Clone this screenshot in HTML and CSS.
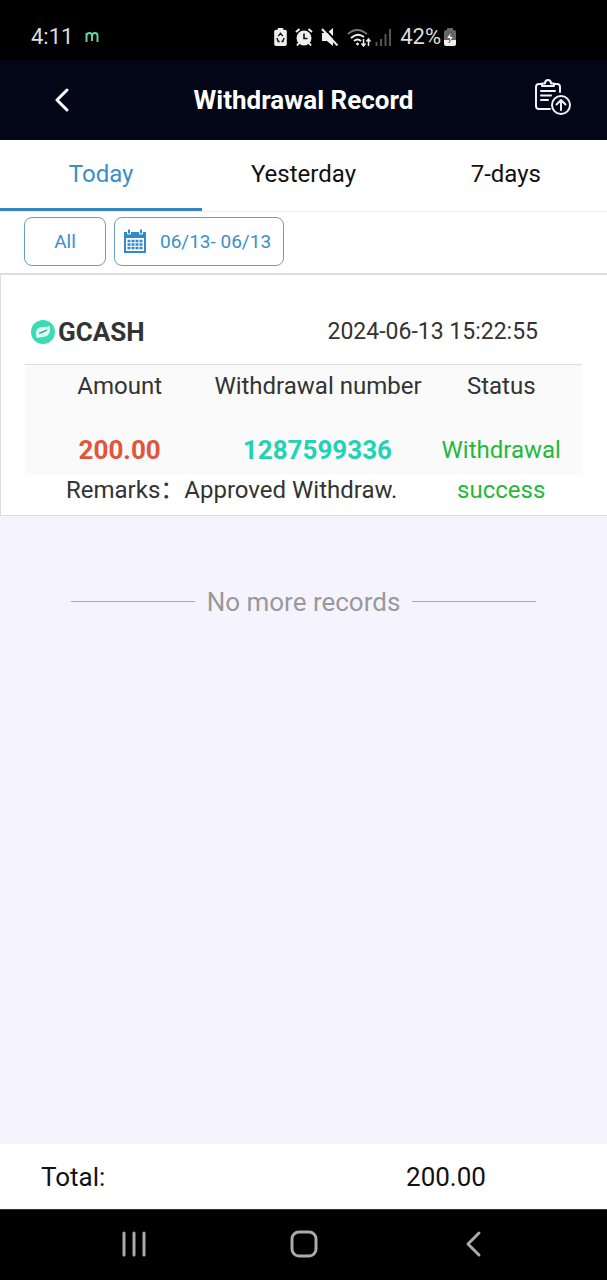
FILE: index.html
```html
<!DOCTYPE html>
<html lang="en">
<head>
    <meta charset="UTF-8">
    <meta name="viewport" content="width=device-width, initial-scale=1">
    <title>Withdrawal Record</title>
    <link rel="stylesheet" href="styles.css">
</head>
<body>
    <div class="status-bar">
        <div class="status-left">
            <span>4:11</span>
            <svg width="14" height="12" viewBox="0 0 14 12" fill="none" stroke="#5fd3a0" stroke-width="2"><path d="M1.500 11V2M1.500 5Q1.500 2 4.500 2Q7 2 7 5V10M7 5Q7 2 10 2Q12.500 2 12.500 5V11"/></svg>
        </div>
        <div class="status-right">
            <!-- battery saver -->
            <svg width="13" height="18" viewBox="0 0 14 20"><path fill="#eee" d="M4 2V0h6v2h2q2 0 2 2v14q0 2-2 2H2q-2 0-2-2V4q0-2 2-2z"/><path d="M4.500 9 7 6l2.500 3M11 11l-1.500 4H8M6 15H4.500L3 11" fill="none" stroke="#111" stroke-width="1.600"/></svg>
            <!-- alarm -->
            <svg width="18" height="18" viewBox="0 0 18 18"><circle cx="9" cy="10" r="7.500" fill="#eee"/><path d="M1 4 4.500 1M17 4l-3.500-3M4 15l-2 2.500M14 15l2 2.500" stroke="#eee" stroke-width="2"/><path d="M9 5.500V10.500H12.500" fill="none" stroke="#111" stroke-width="1.600"/></svg>
            <!-- muted -->
            <svg width="18" height="18" viewBox="0 0 18 18"><path d="M1 5h5l6-5v18l-6-5H1z" fill="#eee"/><path d="M3 0 18 16" stroke="#000" stroke-width="2"/><path d="M1 1 16.500 17.500" stroke="#eee" stroke-width="2"/></svg>
            <!-- wifi -->
            <svg width="24" height="19" viewBox="0 0 24 19" fill="none" stroke="#eee" stroke-width="2"><path d="M1 6Q10-2 20 6" stroke="#777"/><path d="M4 10Q10.500 4 17 9M7 13Q10.500 10 14 13"/><circle cx="10.500" cy="16" r="1" fill="#eee" stroke-width="1"/><path d="M16.500 11v7M14.500 15.500l2 2.500 2-2.500M21.500 18v-7M19.500 13.500l2-2.500 2 2.500" stroke-width="1.500"/></svg>
            <!-- signal -->
            <svg class="signal" width="17" height="18" viewBox="0 0 17 18" stroke="#555" stroke-width="2"><path d="M1.500 18v-4M6 18v-7M10.500 18V6M15 18V1"/></svg>
            <span class="battery-text">42%</span>
            <svg width="12" height="18" viewBox="0 0 12 18"><path fill="#666" d="M3 2V0h6v2h1q2 0 2 2v8H0V4q0-2 2-2z"/><path fill="#eee" d="M0 12h12v4q0 2-2 2H2q-2 0-2-2z"/><path d="M7 4 2.500 10.500H6L5 15l4.500-6.500H6.500z" fill="#fff" stroke="#444" stroke-width=".6"/></svg>
        </div>
    </div>

    <header class="app-bar">
        <button class="icon-btn back" aria-label="Back">
            <svg width="16" height="24" viewBox="0 0 16 24" fill="none" stroke="#fff" stroke-width="3" stroke-linecap="round" stroke-linejoin="round"><path d="M13 2 3 12l10 10"/></svg>
        </button>
        <h1>Withdrawal Record</h1>
        <button class="icon-btn submit" aria-label="Submit record">
            <svg width="36" height="36" viewBox="0 0 36 36" fill="none" stroke="#f0f2fa" stroke-width="2" stroke-linecap="round" stroke-linejoin="round">
                <path d="M7 5H4Q1 5 1 8v19q0 3 3 3h11M19 5h3q3 0 3 3v5"/>
                <path d="M7 7V4.500h3Q10 1 13 1t3 3.500h3V7z"/>
                <path d="M6 12h14M6 16.500h10M6 21h7"/>
                <circle cx="26" cy="26" r="9"/>
                <path d="M26 31V21M21.500 25.500 26 21l4.500 4.500"/>
            </svg>
        </button>
    </header>

    <nav class="tabs">
        <button class="tab active">Today</button>
        <button class="tab">Yesterday</button>
        <button class="tab">7-days</button>
    </nav>

    <div class="filters">
        <button class="filter filter-all">All</button>
        <button class="filter filter-date">
            <svg width="22" height="25" viewBox="0 0 22 25"><path d="M0 3h22v21H0z" fill="#2f8bcd"/><path d="M2 9h18v13H2z" fill="#fff"/><path d="M3.500 0h3v5h-3zM15.500 0h3v5h-3z" fill="#2f8bcd" stroke="#fff"/><path d="M3.500 12h15M3.500 15.500h15M3.500 19h15" stroke="#2f8bcd" stroke-width="2.500" stroke-dasharray="3 1"/></svg>
            06/13- 06/13
        </button>
    </div>

    <main class="records">
        <section class="record">
            <div class="record-head">
                <svg width="24" height="24" viewBox="0 0 24 24"><circle cx="12" cy="12" r="12" fill="#3bdcb4"/><path d="M5 12Q6 7 12 7q4 0 7-1 1 11-7 11-3 0-6 1Q5 16 5 12z" fill="#e4fff7"/><path d="M8 13.500 16 10" fill="none" stroke="#36b395" stroke-width="1.500"/></svg>
                <h2>GCASH</h2>
                <time datetime="2024-06-13T15:22:55">2024-06-13 15:22:55</time>
            </div>
            <table class="record-table">
                <thead>
                    <tr>
                        <th class="col-amount">Amount</th>
                        <th class="col-number">Withdrawal number</th>
                        <th class="col-status">Status</th>
                    </tr>
                </thead>
                <tbody>
                    <tr>
                        <td class="amount">200.00</td>
                        <td class="number">1287599336</td>
                        <td class="status" rowspan="2">Withdrawal success</td>
                    </tr>
                    <tr>
                        <td class="remarks" colspan="2">Remarks：Approved Withdraw.</td>
                    </tr>
                </tbody>
            </table>
        </section>
        <p class="no-more">No more records</p>
    </main>

    <footer class="total">
        <span>Total:</span>
        <span class="total-value">200.00</span>
    </footer>

    <div class="nav-bar">
        <button class="icon-btn" aria-label="Recent apps">
            <svg width="26" height="28" viewBox="0 0 26 28" stroke="#aaa" stroke-width="3" stroke-linecap="round"><path d="M3 3v22M13 3v22M23 3v22"/></svg>
        </button>
        <button class="icon-btn" aria-label="Home">
            <svg width="28" height="28" viewBox="0 0 28 28" fill="none" stroke="#aaa" stroke-width="3"><rect x="2" y="2" width="24" height="24" rx="7"/></svg>
        </button>
        <button class="icon-btn" aria-label="Back">
            <svg width="28" height="28" viewBox="0 0 28 28" fill="none" stroke="#aaa" stroke-width="3" stroke-linecap="round" stroke-linejoin="round"><path d="M19 3 8 14l11 11"/></svg>
        </button>
    </div>
</body>
</html>
```
FILE: styles.css
```css
* {
    margin: 0;
    padding: 0;
    box-sizing: border-box;
}

body {
    display: flex;
    flex-direction: column;
    min-height: 100vh;
    font-family: Roboto, "Noto Sans CJK SC", sans-serif;
    font-size: 24px;
    line-height: 30px;
    color: #111;
    background-color: #f5f4fe;
}

button {
    font: inherit;
    color: inherit;
    background: none;
    border: none;
    cursor: pointer;
}

svg {
    display: block;
    flex-shrink: 0;
}

/* Phone status bar */
.status-bar {
    display: flex;
    align-items: center;
    height: 60px;
    padding: 14px 151px 0 31px;
    font-size: 22px;
    color: #ddd;
    background: #000;
}

.status-left, .status-right {
    display: flex;
    align-items: center;
}

.status-left {
    gap: 12px;
}

.status-right {
    gap: 8px;
    margin-left: auto;
}

.signal {
    margin-left: -4px;
}

.battery-text {
    margin-right: -5px;
}

.app-bar {
    display: grid;
    grid-template-columns: 124px 1fr 124px;
    align-items: center;
    height: 80px;
    color: #fff;
    background: #020617;
}

.app-bar h1 {
    font-size: 26px;
    font-weight: 700;
    text-align: center;
}

.icon-btn {
    display: flex;
    align-items: center;
    justify-content: center;
}

.submit {
    padding: 0 0 6px 16px;
}

.tabs {
    display: grid;
    grid-template-columns: repeat(3, 1fr);
    background: #fff;
    border-bottom: 1px solid #eee;
}

.tab {
    height: 71px;
    border-bottom: 3px solid transparent;
}

.tab.active {
    color: #3a8fc8;
    border-bottom-color: #3483c2;
}

.filters {
    display: flex;
    gap: 8px;
    padding: 5px 24px 7px;
    background: #fff;
    border-bottom: 2px solid #ddd;
}

.filter {
    display: flex;
    align-items: center;
    justify-content: center;
    height: 49px;
    font-size: 19px;
    color: #3a8fc8;
    border: 1px solid #6b9fb8;
    border-radius: 8px;
}

.filter-all {
    width: 82px;
}

.filter-date {
    gap: 14px;
    padding: 0 12px 0 9px;
}

.records {
    flex: 1;
}

.record {
    padding: 24px 25px 5px 24px;
    color: #333;
    background: #fff;
    border-left: 1px solid #ddd;
    border-bottom: 1px solid #ddd;
}

.record-head {
    display: flex;
    align-items: center;
    height: 65px;
    padding: 0 44px 0 6px;
}

.record-head h2 {
    margin-left: 3px;
    font-size: 26px;
    font-weight: 700;
}

.record-head time {
    margin-left: auto;
    font-size: 23px;
}

.record-table {
    width: 100%;
    table-layout: fixed;
    border-collapse: collapse;
    border-top: 1px solid #ddd;
    /* Tint stops above the remarks line */
    background: linear-gradient(#fafafa, #fafafa) 0 0 / 100% 110px no-repeat;
}

.col-amount {
    width: 34%;
}

.col-number {
    width: 37%;
}

.col-status {
    width: 29%;
}

.record-table th {
    height: 43px;
    font-weight: 400;
    white-space: nowrap;
}

.record-table td {
    line-height: 40px;
    text-align: center;
    vertical-align: bottom;
}

.record-table .amount, .record-table .number {
    height: 62px;
    font-size: 26px;
    font-weight: 700;
}

.record-table .amount {
    color: #e2543c;
}

.record-table .number {
    color: #1fd3b4;
}

.record-table .status {
    color: #1fb93a;
}

.record-table .remarks {
    padding-left: 41px;
    text-align: left;
}

.no-more {
    display: flex;
    align-items: center;
    gap: 12px;
    margin-top: 71px;
    padding: 0 71px;
    font-size: 26px;
    color: #999;
}

.no-more::before, .no-more::after {
    content: "";
    flex: 1;
    height: 1px;
    background: #aaa;
}

.total {
    display: grid;
    grid-template-columns: 1fr 1fr;
    align-items: center;
    height: 65px;
    padding: 0 26px 0 41px;
    font-size: 26px;
    background: #fff;
}

.total-value {
    text-align: center;
}

.nav-bar {
    display: grid;
    grid-template-columns: repeat(3, 170px);
    justify-content: center;
    height: 71px;
    padding-bottom: 2px;
    background: #000;
    border-top: 1px solid #333;
}
```
